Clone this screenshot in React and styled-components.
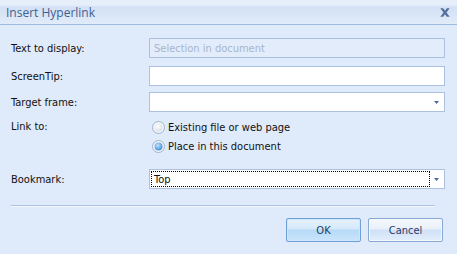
import styled, { createGlobalStyle } from "styled-components"

const Global = createGlobalStyle`
body {
    margin: 0;
    background: #dfeafa;
}
`

export default function App(){
    return (<Dialog>
        <Global />
        <TitleBar>
            <Title>Insert Hyperlink</Title>
            <Close>
                <svg width="10" height="9" viewBox="0 0 10 9">
                    <path d="M0.3 0.3 L3.2 0.3 L5 2.7 L6.8 0.3 L9.7 0.3 L6.5 4.5 L9.7 8.7 L6.8 8.7 L5 6.3 L3.2 8.7 L0.3 8.7 L3.5 4.5 Z" fill="#52709f" />
                </svg>
            </Close>
        </TitleBar>
        <Body>
            <Row top={13}>
                <Label>Text to display:</Label>
                <Field disabled>Selection in document</Field>
            </Row>
            <Row top={8}>
                <Label>ScreenTip:</Label>
                <Field />
            </Row>
            <Row top={6}>
                <Label>Target frame:</Label>
                <Field><Arrow /></Field>
            </Row>
            <LinkRow>
                <LinkLabel>Link to:</LinkLabel>
                <Options>
                    <Option><Radio /><span>Existing file or web page</span></Option>
                    <Option><Radio checked /><span>Place in this document</span></Option>
                </Options>
            </LinkRow>
            <Row top={13}>
                <Label>Bookmark:</Label>
                <Field>
                    <Focus>Top</Focus>
                    <Arrow />
                </Field>
            </Row>
            <Divider />
            <Buttons>
                <Button primary>OK</Button>
                <Button>Cancel</Button>
            </Buttons>
        </Body>
    </Dialog>);
}

function Radio({checked}){
    return (<RadioBox>
        <svg width="13" height="13" viewBox="0 0 13 13">
            <defs>
                <radialGradient id={checked ? "rc" : "ru"} cx="0.4" cy="0.35" r="0.7">
                    <stop offset="0" stopColor={checked ? "#bfe2fb" : "#ffffff"} />
                    <stop offset="1" stopColor={checked ? "#3c8ad6" : "#d4dde9"} />
                </radialGradient>
            </defs>
            <circle cx="6.5" cy="6.5" r="6" fill="#f3f6fa" stroke="#9eb2ca" strokeWidth="1" />
            <circle cx="6.5" cy="6.5" r="4" fill={`url(#${checked ? "rc" : "ru"})`} />
        </svg>
    </RadioBox>);
}

function Arrow(){
    return (<ArrowBox>
        <svg width="5" height="3" viewBox="0 0 5 3">
            <path d="M0 0 L5 0 L2.5 3 Z" fill="#4a6a9c" />
        </svg>
    </ArrowBox>);
}

const Dialog = styled.div`
width: 457px;
height: 254px;
background: #dfeafa;
font-family: 'DejaVu Sans Condensed', 'DejaVu Sans', sans-serif;
font-size: 11px;
color: #111;
overflow: hidden;
`

const TitleBar = styled.div`
display: flex;
align-items: center;
justify-content: space-between;
height: 25px;
padding: 0 7px 0 6px;
box-sizing: border-box;
background: linear-gradient(to bottom, #e6eefa 0px, #e6eefa 5px, #d3e1f4 7px, #dce7f7 18px, #e2ecfa 25px);
border-bottom: 1px solid #9dbde3;
`

const Title = styled.div`
font-family: 'Open Sans', 'Noto Sans', sans-serif;
font-size: 12px;
color: #3e5f94;
padding-top: 1px;
`

const Close = styled.div`
display: flex;
padding-top: 1px;
`

const Body = styled.div`
display: flex;
flex-direction: column;
padding: 0 12px 0 11px;
`

const Row = styled.div`
display: flex;
align-items: center;
height: 20px;
margin-top: ${p => p.top}px;
`

const Label = styled.div`
width: 138px;
flex-shrink: 0;
`

const Field = styled.div`
position: relative;
flex: 1;
height: 20px;
box-sizing: border-box;
display: flex;
align-items: center;
padding: 0 4px;
border: 1px solid #abc1df;
background: ${p => p.disabled ? "#e2ecfb" : "#ffffff"};
color: ${p => p.disabled ? "#a6b6cd" : "#111"};
`

const ArrowBox = styled.div`
position: absolute;
right: 5px;
top: 8px;
display: flex;
`

const Focus = styled.div`
position: absolute;
left: 1px;
top: 1px;
bottom: 1px;
right: 14px;
border: 1px dotted #000;
box-sizing: border-box;
display: flex;
align-items: center;
padding-left: 2px;
`

const LinkRow = styled.div`
display: flex;
align-items: flex-start;
margin-top: 6px;
`

const LinkLabel = styled.div`
width: 138px;
flex-shrink: 0;
height: 19px;
line-height: 17px;
`

const Options = styled.div`
display: flex;
flex-direction: column;
`

const Option = styled.div`
display: flex;
align-items: center;
height: 19px;
gap: 3px;
padding-left: 3px;
`

const RadioBox = styled.div`
display: flex;
width: 13px;
height: 13px;
`

const Divider = styled.div`
margin-top: 16px;
width: 424px;
height: 1px;
background: #a9c2e2;
border-bottom: 1px solid #f5f9ff;
`

const Buttons = styled.div`
display: flex;
justify-content: flex-end;
gap: 7px;
margin-top: 11px;
padding-right: 2px;
`

const Button = styled.div`
width: 75px;
height: 24px;
box-sizing: border-box;
display: flex;
align-items: center;
justify-content: center;
border: 1px solid ${p => p.primary ? "#6fa0d8" : "#86a9d6"};
border-radius: 2px;
color: #1f3a6a;
box-shadow: inset 0 0 0 1px ${p => p.primary ? "#cde6fb" : "#f4f8fd"};
background: ${p => p.primary
    ? "linear-gradient(to bottom, #e6f2fd 0%, #d5e9fb 45%, #b7daf7 50%, #c9e5fb 100%)"
    : "linear-gradient(to bottom, #f6f9fd 0%, #e9f0fa 45%, #cfe1f6 50%, #e2eefb 100%)"};
`
